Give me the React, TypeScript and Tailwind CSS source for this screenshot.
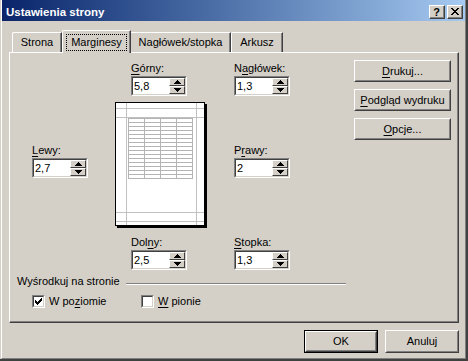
import React from 'react'

const face = 'bg-[#D4D0C8]'

// access key underline
const U = ({ children }: { children: React.ReactNode }) => <span className="underline underline-offset-[2px]">{children}</span>

function Arrow({ up }: { up?: boolean }) {
  return (
    <svg width="7" height="4" viewBox="0 0 7 4" shapeRendering="crispEdges">
      {up ? <path d="M3 0h1v1h1v1h1v1h1v1H0V3h1V2h1V1h1z" fill="#000" /> : <path d="M0 0h7v1H6v1H5v1H4v1H3V3H2V2H1V1H0z" fill="#000" />}
    </svg>
  )
}

function SpinBtn({ up }: { up?: boolean }) {
  return (
    <div className={`flex h-[8px] items-center justify-center border-t border-l border-t-white border-l-white border-r border-b border-r-[#404040] border-b-[#404040] ${face}`}>
      <Arrow up={up} />
    </div>
  )
}

function Spin({ value }: { value: string }) {
  return (
    <div className="flex h-[20px] w-[56px] border border-t-[#808080] border-l-[#808080] border-r-white border-b-white">
      <div className="flex flex-1 border border-t-[#404040] border-l-[#404040] border-r-[#D4D0C8] border-b-[#D4D0C8] bg-white">
        <span className="flex-1 pl-[1px] leading-[16px]">{value}</span>
        <div className="flex w-[16px] flex-col">
          <SpinBtn up />
          <SpinBtn />
        </div>
      </div>
    </div>
  )
}

function Field({ label, value, className = '' }: { label: React.ReactNode; value: string; className?: string }) {
  return (
    <div className={`flex flex-col ${className}`}>
      <div className="h-[13px] leading-[13px]">{label}</div>
      <div className="mt-[1px]">
        <Spin value={value} />
      </div>
    </div>
  )
}

function Btn({ children, className = '', def }: { children: React.ReactNode; className?: string; def?: boolean }) {
  const inner = (
    <div className="flex flex-1 border border-t-white border-l-white border-r-[#404040] border-b-[#404040]">
      <div className="flex flex-1 items-center justify-center border border-t-[#D4D0C8] border-l-[#D4D0C8] border-r-[#808080] border-b-[#808080] leading-[13px]">
        {children}
      </div>
    </div>
  )
  return <div className={`flex ${def ? 'border border-black' : ''} ${className}`}>{inner}</div>
}

function Check({ checked }: { checked?: boolean }) {
  return (
    <div className="flex h-[13px] w-[13px] border border-t-[#808080] border-l-[#808080] border-r-white border-b-white">
      <div className="flex flex-1 items-center justify-center border border-t-[#404040] border-l-[#404040] border-r-[#D4D0C8] border-b-[#D4D0C8] bg-white">
        {checked && (
          <svg width="7" height="7" viewBox="0 0 7 7" shapeRendering="crispEdges">
            <path d="M6 0h1v3H6v1H5v1H4v1H3v1H2V6H1V5H0V2h1v1h1v1h1V3h1V2h1V1h1z" fill="#000" />
          </svg>
        )}
      </div>
    </div>
  )
}

function Preview() {
  const rows = Array.from({ length: 16 }, (_, i) => 16.5 + i * 4)
  const cols = [13.5, 29.5, 45.5, 61.5, 77.5]
  return (
    <svg width="92" height="126" viewBox="0 0 92 126" shapeRendering="crispEdges">
      <rect x="2" y="2" width="90" height="124" fill="#000" />
      <rect x="0.5" y="0.5" width="89" height="123" fill="#fff" stroke="#000" />
      <g stroke="#C0C0C0">
        <line x1="11.5" y1="1" x2="11.5" y2="123" />
        <line x1="81.5" y1="1" x2="81.5" y2="123" />
        <line x1="1" y1="6.5" x2="89" y2="6.5" />
        <line x1="1" y1="15.5" x2="89" y2="15.5" />
        <line x1="1" y1="110.5" x2="89" y2="110.5" />
        <line x1="1" y1="119.5" x2="89" y2="119.5" />
      </g>
      <g stroke="#B4B4B4">
        {rows.map((y) => (
          <line key={y} x1="13" y1={y} x2="78" y2={y} />
        ))}
        {cols.map((x) => (
          <line key={x} x1={x} y1="16" x2={x} y2="77" />
        ))}
      </g>
    </svg>
  )
}

function TitleBtn({ children }: { children: React.ReactNode }) {
  return (
    <div className="flex h-[14px] w-[16px] border border-t-white border-l-white border-r-[#404040] border-b-[#404040] bg-[#D4D0C8]">
      <div className="flex flex-1 items-center justify-center border-r border-b border-r-[#808080] border-b-[#808080] text-[11px] font-bold leading-[10px] text-black">
        {children}
      </div>
    </div>
  )
}

export default function App() {
  return (
    <div className={`h-[361px] w-[468px] overflow-hidden pl-[1px] ${face} border-r-2 border-b-2 border-r-[#404040] border-b-[#404040] font-['Liberation_Sans',sans-serif] text-[11px] text-black`}>
      <div className="flex h-full flex-col border-l border-l-white border-r border-r-[#808080] border-b border-b-[#808080]">
        {/* title bar */}
        <div className="flex h-[21px] items-center bg-linear-to-r from-[#0A246A] to-[#A6CAF0] pt-[3px] pl-[4px] pr-[2px]">
          <span className="flex-1 text-[11.5px] font-bold leading-[13px] text-white">Ustawienia strony</span>
          <div className="flex gap-[2px]">
            <TitleBtn>?</TitleBtn>
            <TitleBtn>
              <svg width="8" height="7" viewBox="0 0 8 7" shapeRendering="crispEdges">
                <path d="M0 0h2v1h1v1h2V1h1V0h2v1H7v1H6v1H5v1h1v1h1v1h1v1H6V6H5V5H3v1H2v1H0V6h1V5h1V4h1V3H2V2H1V1H0z" fill="#000" />
              </svg>
            </TitleBtn>
          </div>
        </div>

        {/* tabs */}
        <div className="mt-[9px] flex h-[22px] items-end pl-[10px]">
          <div className="flex h-[20px] w-[50px] justify-center rounded-tl-[2px] border-t border-l border-t-white border-l-white border-r border-r-[#404040] pt-[3px] leading-[13px] shadow-[inset_-1px_0_0_#808080]">
            Strona
          </div>
          <div className={`relative z-10 -mb-[1px] h-[23px] w-[69px] rounded-tl-[2px] border-t border-l border-t-white border-l-white border-r border-r-[#404040] shadow-[inset_-1px_0_0_#808080] ${face}`}>
            <div className="mt-[3px] ml-[3px] flex h-[17px] w-[61px] items-center justify-center border border-dotted border-black leading-[13px]">
              Marginesy
            </div>
          </div>
          <div className="flex h-[20px] w-[100px] justify-center border-t border-t-white border-r border-r-[#404040] pt-[3px] leading-[13px] shadow-[inset_-1px_0_0_#808080]">
            Nagłówek/stopka
          </div>
          <div className="flex h-[20px] w-[52px] justify-center rounded-tl-[2px] border-t border-l border-t-white border-l-white border-r border-r-[#404040] pt-[3px] leading-[13px] shadow-[inset_-1px_0_0_#808080]">
            Arkusz
          </div>
        </div>

        {/* panel */}
        <div className="ml-[7px] flex h-[271px] w-[450px] flex-col border-t border-l border-t-white border-l-white border-r border-b border-r-[#404040] border-b-[#404040] shadow-[inset_-1px_-1px_0_#808080]">
          <div className="flex pt-[7px] pl-[22px]">
            <div className="w-[56px] pt-[84px]">
              <Field label={<><U>L</U>ewy:</>} value="2,7" />
            </div>

            <div className="ml-[27px] flex w-[91px] flex-col pt-[2px]">
              <Field className="pl-[16px]" label={<><U>G</U>órny:</>} value="5,8" />
              <div className="mt-[6px]">
                <Preview />
              </div>
              <Field className="mt-[8px] pl-[16px]" label={<>Dol<U>n</U>y:</>} value="2,5" />
            </div>

            <div className="ml-[28px] flex w-[56px] flex-col pt-[2px]">
              <Field label={<>N<U>a</U>główek:</>} value="1,3" />
              <Field className="mt-[48px]" label={<>P<U>r</U>awy:</>} value="2" />
              <Field className="mt-[58px]" label={<><U>S</U>topka:</>} value="1,3" />
            </div>

            <div className="ml-[64px] flex w-[97px] flex-col gap-[7px]">
              <Btn className="h-[22px]"><U>D</U>rukuj...</Btn>
              <Btn className="h-[22px]"><U>P</U>odgląd wydruku</Btn>
              <Btn className="h-[22px]"><U>O</U>pcje...</Btn>
            </div>
          </div>

          <div className="mt-[5px] flex items-start pl-[7px]">
            <span className="leading-[13px]">Wyśrodkuj na stronie</span>
            <div className="mt-[8px] ml-[6px] h-[2px] w-[220px] border-t border-t-[#808080] border-b border-b-white" />
          </div>

          <div className="mt-[7px] flex items-center pl-[22px]">
            <div className="flex w-[109px] items-center gap-[4px]">
              <Check checked />
              <span className="leading-[13px]">W po<U>z</U>iomie</span>
            </div>
            <div className="flex items-center gap-[4px]">
              <Check />
              <span className="leading-[13px]"><U>W</U> pionie</span>
            </div>
          </div>
        </div>

        {/* bottom buttons */}
        <div className="mt-[7px] flex justify-end gap-[7px] pr-[6px]">
          <Btn def className="h-[23px] w-[74px]">OK</Btn>
          <Btn className="h-[23px] w-[74px]">Anuluj</Btn>
        </div>
      </div>
    </div>
  )
}
